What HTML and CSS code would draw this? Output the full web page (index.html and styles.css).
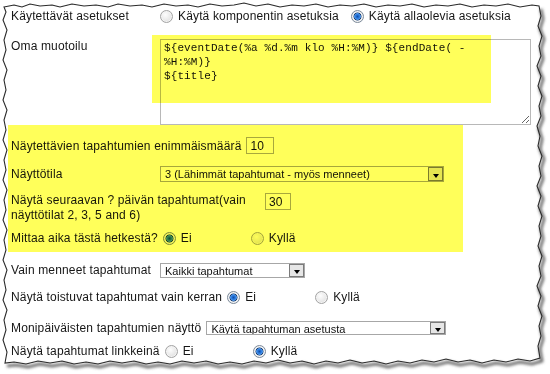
FILE: index.html
```html
<!DOCTYPE html>
<html lang="fi">
<head>
    <meta charset="UTF-8">
    <meta name="viewport" content="width=device-width, initial-scale=1.0">
    <title>Tapahtumakalenterin asetukset</title>
    <link rel="stylesheet" href="styles.css">
</head>
<body>
    <div class="page">
        <form class="settings">
            <div class="row first">
                <span class="label">Käytettävät asetukset</span>
                <label class="option wide"><input type="radio" name="source"> Käytä komponentin asetuksia</label>
                <label class="option"><input type="radio" name="source" checked> Käytä allaolevia asetuksia</label>
            </div>

            <div class="row top gap-15">
                <span class="label">Oma muotoilu</span>
                <textarea class="format">${eventDate(%a %d.%m klo %H:%M)} ${endDate( - %H:%M)}
${title}</textarea>
            </div>

            <div class="row gap-12">
                <label class="label" for="maxCount">Näytettävien tapahtumien enimmäismäärä</label>
                <input type="text" id="maxCount" class="text" value="10">
            </div>

            <div class="row gap-12">
                <label class="label" for="mode">Näyttötila</label>
                <span class="select mode">
                    <select id="mode">
                        <option>3 (Lähimmät tapahtumat - myös menneet)</option>
                    </select>
                </span>
            </div>

            <div class="row top gap-11">
                <label class="label multi" for="days">Näytä seuraavan ? päivän tapahtumat(vain näyttötilat 2, 3, 5 and 6)</label>
                <input type="text" id="days" class="text" value="30">
            </div>

            <div class="row gap-7">
                <span class="label">Mittaa aika tästä hetkestä?</span>
                <label class="option"><input type="radio" name="now" checked> Ei</label>
                <label class="option"><input type="radio" name="now"> Kyllä</label>
            </div>

            <div class="row gap-16">
                <label class="label" for="past">Vain menneet tapahtumat</label>
                <span class="select past">
                    <select id="past">
                        <option>Kaikki tapahtumat</option>
                    </select>
                </span>
            </div>

            <div class="row gap-11">
                <span class="label">Näytä toistuvat tapahtumat vain kerran</span>
                <label class="option"><input type="radio" name="repeat" checked> Ei</label>
                <label class="option"><input type="radio" name="repeat"> Kyllä</label>
            </div>

            <div class="row gap-15">
                <label class="label" for="multiday">Monipäiväisten tapahtumien näyttö</label>
                <span class="select multiday">
                    <select id="multiday">
                        <option>Käytä tapahtuman asetusta</option>
                    </select>
                </span>
            </div>

            <div class="row gap-7">
                <span class="label">Näytä tapahtumat linkkeinä</span>
                <label class="option"><input type="radio" name="links"> Ei</label>
                <label class="option"><input type="radio" name="links" checked> Kyllä</label>
            </div>
        </form>

        <!-- highlighter marks -->
        <div class="mark mark-format"></div>
        <div class="mark mark-view"></div>

        <!-- torn paper edge -->
        <svg class="edge" width="550" height="374" viewBox="0 0 550 374">
            <defs>
                <filter id="blur"><feGaussianBlur stdDeviation="1.6"/></filter>
            </defs>
            <path class="edge-outside" fill-rule="evenodd" d="M0,0 H550 V374 H0 Z M4,7 L14,5 L22,7 L30,4 L40,6 L52,5 L60,7 L72,4 L84,6 L96,5 L108,7 L118,4 L130,6 L142,5 L152,7 L164,4 L176,6 L188,5 L198,7 L210,4 L222,6 L234,5 L244,3 L256,6 L268,4 L280,7 L292,5 L304,6 L316,4 L328,7 L340,5 L352,6 L364,4 L376,7 L388,5 L400,6 L412,4 L424,7 L436,5 L448,6 L460,4 L472,7 L484,5 L496,6 L508,4 L520,7 L532,5 L539,6 L541,16 L538,26 L542,36 L539,46 L541,56 L537,66 L541,76 L538,86 L542,96 L539,106 L541,116 L537,126 L540,136 L538,146 L542,156 L539,166 L541,176 L537,186 L541,196 L538,206 L542,216 L539,226 L541,236 L538,246 L542,256 L539,266 L541,276 L537,286 L541,296 L538,306 L542,316 L539,326 L541,336 L538,346 L540,358 L530,361 L518,359 L506,362 L494,360 L482,363 L470,360 L458,362 L446,359 L434,362 L422,360 L410,363 L398,361 L386,364 L374,361 L362,363 L350,360 L338,363 L326,361 L314,364 L302,361 L290,363 L278,360 L266,363 L254,361 L242,364 L230,362 L218,364 L206,361 L194,363 L182,361 L170,364 L158,362 L146,364 L134,361 L122,363 L110,361 L98,364 L86,362 L74,364 L62,361 L50,363 L38,361 L26,364 L14,362 L5,363 L7,352 L3,340 L6,330 L4,320 L7,310 L3,300 L6,290 L4,280 L7,270 L3,260 L6,250 L4,240 L7,230 L3,220 L6,210 L4,200 L7,190 L3,180 L6,170 L4,160 L7,150 L3,140 L6,130 L4,120 L7,110 L3,100 L6,90 L4,80 L7,70 L3,60 L6,50 L4,40 L7,30 L3,20 L6,12 Z"/>
            <path class="edge-shadow" filter="url(#blur)" d="M539,6 L541,16 L538,26 L542,36 L539,46 L541,56 L537,66 L541,76 L538,86 L542,96 L539,106 L541,116 L537,126 L540,136 L538,146 L542,156 L539,166 L541,176 L537,186 L541,196 L538,206 L542,216 L539,226 L541,236 L538,246 L542,256 L539,266 L541,276 L537,286 L541,296 L538,306 L542,316 L539,326 L541,336 L538,346 L540,358 L530,361 L518,359 L506,362 L494,360 L482,363 L470,360 L458,362 L446,359 L434,362 L422,360 L410,363 L398,361 L386,364 L374,361 L362,363 L350,360 L338,363 L326,361 L314,364 L302,361 L290,363 L278,360 L266,363 L254,361 L242,364 L230,362 L218,364 L206,361 L194,363 L182,361 L170,364 L158,362 L146,364 L134,361 L122,363 L110,361 L98,364 L86,362 L74,364 L62,361 L50,363 L38,361 L26,364 L14,362 L5,363"/>
            <path class="edge-line" d="M4,7 L14,5 L22,7 L30,4 L40,6 L52,5 L60,7 L72,4 L84,6 L96,5 L108,7 L118,4 L130,6 L142,5 L152,7 L164,4 L176,6 L188,5 L198,7 L210,4 L222,6 L234,5 L244,3 L256,6 L268,4 L280,7 L292,5 L304,6 L316,4 L328,7 L340,5 L352,6 L364,4 L376,7 L388,5 L400,6 L412,4 L424,7 L436,5 L448,6 L460,4 L472,7 L484,5 L496,6 L508,4 L520,7 L532,5 L539,6 L541,16 L538,26 L542,36 L539,46 L541,56 L537,66 L541,76 L538,86 L542,96 L539,106 L541,116 L537,126 L540,136 L538,146 L542,156 L539,166 L541,176 L537,186 L541,196 L538,206 L542,216 L539,226 L541,236 L538,246 L542,256 L539,266 L541,276 L537,286 L541,296 L538,306 L542,316 L539,326 L541,336 L538,346 L540,358 L530,361 L518,359 L506,362 L494,360 L482,363 L470,360 L458,362 L446,359 L434,362 L422,360 L410,363 L398,361 L386,364 L374,361 L362,363 L350,360 L338,363 L326,361 L314,364 L302,361 L290,363 L278,360 L266,363 L254,361 L242,364 L230,362 L218,364 L206,361 L194,363 L182,361 L170,364 L158,362 L146,364 L134,361 L122,363 L110,361 L98,364 L86,362 L74,364 L62,361 L50,363 L38,361 L26,364 L14,362 L5,363 L7,352 L3,340 L6,330 L4,320 L7,310 L3,300 L6,290 L4,280 L7,270 L3,260 L6,250 L4,240 L7,230 L3,220 L6,210 L4,200 L7,190 L3,180 L6,170 L4,160 L7,150 L3,140 L6,130 L4,120 L7,110 L3,100 L6,90 L4,80 L7,70 L3,60 L6,50 L4,40 L7,30 L3,20 L6,12 Z"/>
        </svg>
    </div>
</body>
</html>
```

FILE: styles.css
```css
body {
    margin: 0;
    background: #fff;
    font-family: 'Liberation Sans', Arial, sans-serif;
    font-size: 12px;
    letter-spacing: 0.15px;
    color: #161616;
}

.page {
    position: relative;
    width: 550px;
    height: 374px;
    overflow: hidden;
}

.settings {
    padding: 8px 0 0 11px;
}

.row {
    display: flex;
    align-items: center;
    min-height: 16px;
    line-height: 16px;
}

.row.top {
    align-items: flex-start;
}

.gap-7 { margin-top: 7px; }
.gap-11 { margin-top: 11px; }
.gap-12 { margin-top: 12px; }
.gap-15 { margin-top: 15px; }
.gap-16 { margin-top: 16px; }

.label {
    min-width: 144px;
    margin-right: 5px;
    white-space: nowrap;
}

.top .label {
    line-height: 14px;
}

.label.multi {
    width: 249px;
    white-space: normal;
    line-height: 15px;
}

.option {
    display: flex;
    align-items: center;
    min-width: 88px;
}

.option.wide {
    padding-right: 12px;
}

input[type="radio"] {
    appearance: none;
    width: 13px;
    height: 13px;
    margin: 0 5px 0 0;
    border: 1px solid #a3a3a3;
    border-radius: 50%;
    background: radial-gradient(circle at 40% 35%, #fdfdfd 0, #e9e9e9 55%, #cfcfcf 100%);
    box-shadow: inset 0 0 0 1px #f4f4f4;
    flex: none;
}

input[type="radio"]:checked {
    border-color: #7d8a99;
    background: radial-gradient(circle, #0f4fa8 0, #2c7be0 2px, #4f96e8 3px, #1d3f6e 3.6px, #e8edf3 4.4px, #cfd6de 100%);
}

.format {
    width: 371px;
    height: 86px;
    box-sizing: border-box;
    margin: 0;
    padding: 1px 28px 1px 3px;
    border: 1px solid #b8b8b8;
    font-family: 'Liberation Mono', 'Courier New', monospace;
    font-size: 11px;
    letter-spacing: 0.1px;
    line-height: 14px;
    color: #111;
}

.text {
    box-sizing: border-box;
    height: 17px;
    margin: 0;
    padding: 0 3px;
    border: 1px solid #a8a8a8;
    font-family: inherit;
    font-size: 12px;
    color: #111;
}

#maxCount {
    width: 28px;
}

#days {
    width: 26px;
}

.select {
    position: relative;
    display: inline-block;
    height: 16px;
}

.select select {
    appearance: none;
    box-sizing: border-box;
    width: 100%;
    height: 100%;
    margin: 0;
    padding: 0 18px 0 4px;
    border: 1px solid #a7a7a7;
    border-radius: 0;
    background: #fff;
    font-family: 'Liberation Sans', Arial, sans-serif;
    font-size: 11px;
    letter-spacing: 0;
    line-height: 14px;
    color: #111;
}

/* dropdown button */
.select::after {
    content: "";
    position: absolute;
    top: 1px;
    bottom: 1px;
    right: 1px;
    width: 15px;
    box-sizing: border-box;
    border: 1px solid #7b7b7b;
    background: #e6e6e6;
    pointer-events: none;
}

.select::before {
    content: "";
    position: absolute;
    z-index: 1;
    bottom: 4px;
    right: 5px;
    border-left: 3.5px solid transparent;
    border-right: 3.5px solid transparent;
    border-top: 4px solid #000;
    pointer-events: none;
}

.select.mode {
    width: 284px;
}

.select.past {
    width: 145px;
    height: 15px;
}

.select.multiday {
    width: 240px;
    height: 14px;
}

.select.multiday::before {
    bottom: 3px;
}

.mark {
    position: absolute;
    background: #ffff5a;
    mix-blend-mode: multiply;
    pointer-events: none;
}

.mark-format {
    left: 152px;
    top: 35px;
    width: 339px;
    height: 68px;
}

.mark-view {
    left: 8px;
    top: 125px;
    width: 455px;
    height: 127px;
}

.edge {
    position: absolute;
    top: 0;
    left: 0;
    pointer-events: none;
}

.edge-outside {
    fill: #fff;
}

.edge-shadow {
    fill: none;
    stroke: #555;
    stroke-width: 2.5;
    transform: translate(2px, 3px);
}

.edge-line {
    fill: none;
    stroke: #2a2a2a;
    stroke-width: 1.1;
}
```
